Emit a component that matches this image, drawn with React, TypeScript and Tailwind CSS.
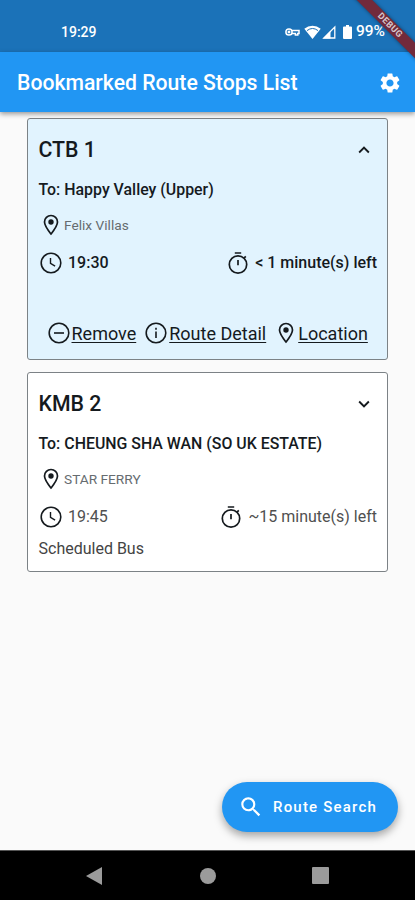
import { useState } from 'react';
import { MdSettings, MdSearch, MdKeyboardArrowUp, MdKeyboardArrowDown } from 'react-icons/md';

interface Bookmark {
  route: string;
  dest: string;
  stop: string;
  time: string;
  left: string;
  urgent: boolean;
  remark?: string;
}

const bookmarks: Bookmark[] = [
  { route: 'CTB 1', dest: 'Happy Valley (Upper)', stop: 'Felix Villas', time: '19:30', left: '< 1 minute(s) left', urgent: true },
  { route: 'KMB 2', dest: 'CHEUNG SHA WAN (SO UK ESTATE)', stop: 'STAR FERRY', time: '19:45', left: '~15 minute(s) left', urgent: false, remark: 'Scheduled Bus' },
];

const PinIcon = () => (
  <svg width="16" height="22" viewBox="0 0 16 22" fill="none" stroke="currentColor" strokeWidth="1.7" className="shrink-0">
    <path d="M8 20C5 16.2 1.5 11.8 1.5 8a6.5 6.5 0 0 1 13 0c0 3.8-3.5 8.2-6.5 12z" />
    <circle cx="8" cy="8" r="2.7" fill="currentColor" stroke="none" />
  </svg>
);

const ClockIcon = () => (
  <svg width="22" height="22" viewBox="0 0 22 22" fill="none" stroke="currentColor" strokeWidth="1.6" className="shrink-0">
    <circle cx="11" cy="11" r="9.8" />
    <path d="M10.5 6v5.4l4.6 2.7" strokeWidth="1.4" />
  </svg>
);

const TimerIcon = () => (
  <svg width="22" height="24" viewBox="0 0 22 24" fill="none" stroke="currentColor" strokeWidth="1.7" className="shrink-0">
    <circle cx="11" cy="13.5" r="8.7" />
    <path d="M7.8 2h6.4M11 9v5.3M17 7.100l1.8-1.8" />
  </svg>
);

const RemoveIcon = () => (
  <svg width="22" height="22" viewBox="0 0 22 22" fill="none" stroke="currentColor" strokeWidth="1.6" className="shrink-0">
    <circle cx="11" cy="11" r="9.8" />
    <path d="M6 11h10" />
  </svg>
);

const InfoIcon = () => (
  <svg width="22" height="22" viewBox="0 0 22 22" fill="none" stroke="currentColor" strokeWidth="1.6" className="shrink-0">
    <circle cx="11" cy="11" r="9.8" />
    <path d="M11 9.5v6.5M11 5.8v2" />
  </svg>
);

function StatusBar() {
  return (
    <div className="flex h-[52px] items-center justify-between bg-[#1b72b8] pt-3 pr-[30px] pl-[61px] text-white">
      <span className="text-[14px] font-medium">19:29</span>
      <div className="flex items-center">
        {/* vpn key */}
        <svg width="15" height="8" viewBox="0 0 15 8" fill="none" stroke="currentColor" strokeWidth="1.5" className="mr-1">
          <circle cx="4" cy="4" r="3.1" />
          <circle cx="4" cy="4" r="0.7" />
          <path d="M7 2.6h7v2.8h-1.2v1.7h-2.4V5.4H7" />
        </svg>
        {/* wifi */}
        <svg width="17" height="14" viewBox="0 0 17 14" className="mr-[1px]">
          <path d="M8.5 14L.3 3.7a13 13 0 0 1 16.4 0z" fill="currentColor" />
          <path d="M3 5.6a9 9 0 0 1 11 0" fill="none" stroke="#1b72b8" strokeWidth="1" />
        </svg>
        {/* signal */}
        <svg width="14" height="14" viewBox="0 0 14 14" className="mr-[7px]">
          <path d="M1.8 13H12.8V2z" fill="none" stroke="currentColor" strokeWidth="1.3" />
          <path d="M1 13.5L8.5 6v7.5z" fill="currentColor" />
        </svg>
        {/* battery */}
        <svg width="9" height="14" viewBox="0 0 9 14" className="mr-1">
          <path d="M1 1.5h2V0h3v1.5h2a1 1 0 0 1 1 1V13a1 1 0 0 1-1 1H1a1 1 0 0 1-1-1V2.500a1 1 0 0 1 1-1z" fill="currentColor" />
        </svg>
        <span className="text-[15.5px] font-medium">99%</span>
      </div>
    </div>
  );
}

function BookmarkCard({ item, defaultOpen }: { item: Bookmark; defaultOpen: boolean }) {
  const [open, setOpen] = useState(defaultOpen);

  return (
    <div className={`rounded-[3px] border border-[#7c8286] pr-[10px] pl-[10.5px] text-[#151a1e] ${item.urgent ? 'bg-[#e1f3fe]' : 'bg-white'}`}>
      <button onClick={() => setOpen(!open)} className="flex h-[62px] w-full items-center justify-between">
        <span className="text-[21.3px] font-medium">{item.route}</span>
        {open ? <MdKeyboardArrowUp size={22} className="mr-[2px]" /> : <MdKeyboardArrowDown size={22} className="mr-[2px]" />}
      </button>
      <div className="flex h-[18px] items-center text-[15.9px] font-medium whitespace-nowrap">To: {item.dest}</div>
      <div className="mt-2 flex h-9 items-center gap-[5px] pl-[4.500px]">
        <PinIcon />
        <span className="text-[13.700px] text-[#666c70]">{item.stop}</span>
      </div>
      <div className={`flex h-10 items-center justify-between text-[16px] ${item.urgent ? 'font-medium' : 'text-[#505050]'}`}>
        <div className="flex items-center gap-[6.500px] pl-[1px]">
          <span className="text-[#151a1e]"><ClockIcon /></span>
          <span>{item.time}</span>
        </div>
        <div className="flex items-center gap-[6px]">
          <span className="text-[#151a1e]"><TimerIcon /></span>
          <span>{item.left}</span>
        </div>
      </div>
      {item.remark && <div className="flex h-6 items-center text-[16px] text-[#444]">{item.remark}</div>}
      {open && (
        <div className="mt-[34px] flex h-8 items-center pl-[9px] text-[18px] whitespace-nowrap">
          <button className="mr-[9px] flex items-center gap-[2px]"><RemoveIcon /><span className="underline decoration-1 underline-offset-2">Remove</span></button>
          <button className="mr-3 flex items-center gap-[2px]"><InfoIcon /><span className="underline decoration-1 underline-offset-2">Route Detail</span></button>
          <button className="flex items-center gap-1"><PinIcon /><span className="underline decoration-1 underline-offset-2">Location</span></button>
        </div>
      )}
      <div className="h-[10px]" />
    </div>
  );
}

export default function App() {
  return (
    <div className="relative flex h-[900px] w-[415px] flex-col overflow-hidden bg-[#fafafa] font-[Roboto,sans-serif]">
      <StatusBar />

      <header className="z-10 flex h-[60px] items-center justify-between bg-[#2196f3] pt-[2px] pr-[13px] pl-[17px] text-white shadow-[0_2px_5px_rgba(0,0,0,0.4)]">
        <h1 className="text-[21.2px] font-medium whitespace-nowrap">Bookmarked Route Stops List</h1>
        <MdSettings size={24} />
      </header>

      <main className="flex flex-1 flex-col gap-3 px-[27px] pt-[6px]">
        {bookmarks.map((b) => (
          <BookmarkCard key={b.route} item={b} defaultOpen={b.urgent} />
        ))}
      </main>

      <div className="flex justify-end pr-[17px] pb-[18px]">
        <button className="flex h-[50px] w-[176px] items-center gap-[9px] rounded-full bg-[#2196f3] pl-4 text-[15px] font-medium tracking-[1.2px] text-white shadow-[0_4px_8px_rgba(0,0,0,0.35)]">
          <MdSearch size={26} />
          <span className="whitespace-nowrap">Route Search</span>
        </button>
      </div>

      {/* system navigation */}
      <nav className="flex h-[50px] items-center justify-between border-t border-[#555] bg-black px-[86px] text-[#9b9b9b]">
        <svg width="16" height="18" viewBox="0 0 16 18"><path d="M0 9L16 0v18z" fill="currentColor" /></svg>
        <div className="ml-[1px] size-4 rounded-full bg-[#9b9b9b]" />
        <div className="size-[17px] rounded-[1px] bg-[#9b9b9b]" />
      </nav>

      {/* debug ribbon */}
      <div className="absolute top-[20px] left-[330px] z-20 flex h-[11px] w-[120px] rotate-45 items-center justify-center bg-[#722a3b] text-[9px] font-bold tracking-[0.5px] text-[#d8c8ce] shadow-[0_0_4px_rgba(0,0,0,0.45)]">
        DEBUG
      </div>
    </div>
  );
}
